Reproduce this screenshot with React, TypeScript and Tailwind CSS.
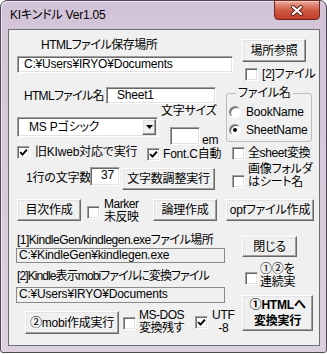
import React from 'react';

const sunken =
  'border border-t-[#a0a0a0] border-l-[#a0a0a0] border-r-white border-b-white bg-white shadow-[inset_1px_1px_0_#696969,inset_-1px_-1px_0_#e3e3e3]';
const raised =
  'border border-t-white border-l-white border-r-[#696969] border-b-[#696969] bg-[#f0f0f0] shadow-[inset_-1px_-1px_0_#a0a0a0,inset_1px_1px_0_#e3e3e3]';

function Btn({ className = '', children }: { className?: string; children: React.ReactNode }) {
  return (
    <button
      type="button"
      className={`flex shrink-0 items-center justify-center text-[12px] leading-[14px] text-black ${raised} ${className}`}
    >
      {children}
    </button>
  );
}

function Check({ checked = false, className = '' }: { checked?: boolean; className?: string }) {
  return (
    <span className={`flex h-[13px] w-[13px] shrink-0 items-center justify-center ${sunken} ${className}`}>
      {checked && (
        <svg width="9" height="9" viewBox="0 0 9 9">
          <path d="M1.2 4.2 L3.5 6.6 L7.9 1.6" fill="none" stroke="#000" strokeWidth="1.9" />
        </svg>
      )}
    </span>
  );
}

function Radio({ checked = false, className = '' }: { checked?: boolean; className?: string }) {
  return (
    <span
      className={`flex h-[12px] w-[12px] shrink-0 items-center justify-center rounded-full border border-t-[#8a8a8a] border-l-[#8a8a8a] border-r-white border-b-white bg-white shadow-[inset_1px_1px_0_#5a5a5a] ${className}`}
    >
      {checked && <span className="h-[4px] w-[4px] rounded-full bg-black" />}
    </span>
  );
}

export default function App() {
  return (
    <div className="h-[354px] w-[327px] overflow-hidden bg-white font-['Liberation_Sans','Noto_Sans_CJK_JP',sans-serif] tracking-[-0.2px] whitespace-nowrap text-black [font-feature-settings:'palt']">
      <div className="flex h-[353px] w-[327px] flex-col rounded-t-[7px] rounded-b-[3px] border border-[#4f4a56] bg-gradient-to-b from-[#d3c3d8] to-[#dcd0df] pr-[6px] pb-[6px] pl-[7px] shadow-[inset_1px_1px_0_#eee6f0]">
        {/* title bar */}
        <div className="flex h-[28px] shrink-0 items-start">
          <div className="mt-[6px] pl-[2px] text-[12px] leading-[16px]">KIキンドル Ver1.05</div>
          <div className="-mt-[1px] ml-auto flex h-[20px] w-[46px] items-center justify-center rounded-b-[4px] border border-[#6b2b22] bg-gradient-to-b from-[#eaaa9c] via-[#cf5a45] to-[#c23d28] shadow-[inset_0_1px_0_#f5cfc5]">
            <svg width="14" height="11" viewBox="0 0 14 11">
              <path d="M3 2 L11 9 M11 2 L3 9" stroke="#5b1e18" strokeWidth="4" strokeLinecap="round" />
              <path d="M3 2 L11 9 M11 2 L3 9" stroke="#fff" strokeWidth="2.2" strokeLinecap="round" />
            </svg>
          </div>
        </div>

        {/* client area */}
        <div className="flex h-[317px] flex-col overflow-hidden border border-[#6f6a78] bg-[#f0f0f0]">
          {/* html save location */}
          <div className="flex h-[54px] shrink-0">
            <div className="ml-[8px] flex w-[216px] flex-col">
              <div className="mt-[8px] pl-[24px] text-[12px] leading-[14px] tracking-[-0.5px]">HTMLファイル保存場所</div>
              <div className={`mt-[4px] h-[17px] pl-[6px] text-[12px] leading-[14px] ${sunken}`}>
                C:¥Users¥IRYO¥Documents
              </div>
            </div>
            <div className="ml-[9px] flex flex-col">
              <Btn className="mt-[9px] h-[23px] w-[64px]">場所参照</Btn>
              <div className="mt-[5px] flex items-center">
                <Check className="ml-[3px]" />
                <span className="ml-[4px] text-[12px] leading-[14px]">[2]ファイル</span>
              </div>
            </div>
          </div>

          {/* file name, font, options */}
          <div className="flex h-[76px] shrink-0">
            <div className="ml-[8px] flex w-[209px] flex-col">
              <div className="flex h-[20px] items-start">
                <div className="mt-[5px] w-[89px] pl-[7px] text-[12px] leading-[14px] tracking-[-0.7px]">HTMLファイル名</div>
                <div className={`mt-[3px] h-[17px] w-[110px] pl-[10px] text-[12px] leading-[14px] ${sunken}`}>Sheet1</div>
              </div>
              <div className="flex h-[42px] items-start">
                <div className={`mt-[13px] flex h-[20px] w-[141px] items-center ${sunken}`}>
                  <span className="flex-1 pl-[11px] text-[12px] leading-[14px]">MS Pゴシック</span>
                  <span className={`mr-[1px] flex h-[16px] w-[14px] items-center justify-center ${raised}`}>
                    <svg width="7" height="4" viewBox="0 0 7 4">
                      <path d="M0 0H7L3.5 4Z" fill="#000" />
                    </svg>
                  </span>
                </div>
                <div className="ml-[3px] flex flex-col">
                  <div className="text-[12px] leading-[14px]">文字サイズ</div>
                  <div className="flex items-start">
                    <div className={`mt-[9px] ml-[9px] h-[18px] w-[30px] ${sunken}`} />
                    <span className="mt-[16px] ml-[2px] text-[12px] leading-[12px]">em</span>
                  </div>
                </div>
              </div>
              <div className="flex h-[14px] items-start">
                <div className="flex w-[130px] items-center">
                  <Check checked />
                  <span className="ml-[5px] text-[12px] leading-[13px]">旧KIweb対応で実行</span>
                </div>
                <div className="mt-[2px] flex items-center">
                  <Check checked />
                  <span className="ml-[3px] text-[12px] leading-[13px]">Font.C自動</span>
                </div>
              </div>
            </div>
            <div className="flex flex-col">
              <fieldset className="mt-[2px] h-[56px] w-[86px] rounded-[3px] border border-[#bdbdbd]">
                <legend className="ml-[9px] px-[2px] text-[12px] leading-[14px]">ファイル名</legend>
                <div className="mt-[5px] flex items-center">
                  <Radio className="ml-[2px]" />
                  <span className="ml-[5px] text-[12px] leading-[14px]">BookName</span>
                </div>
                <div className="mt-[4px] flex items-center">
                  <Radio checked className="ml-[2px]" />
                  <span className="ml-[5px] text-[12px] leading-[14px]">SheetName</span>
                </div>
              </fieldset>
              <div className="mt-[5px] flex items-center">
                <Check className="ml-[6px]" />
                <span className="ml-[3px] text-[12px] leading-[13px] tracking-[-0.4px]">全sheet変換</span>
              </div>
            </div>
          </div>

          {/* characters per line */}
          <div className="flex h-[36px] shrink-0 items-start">
            <div className="mt-[11px] ml-[17px] w-[64px] text-[12px] leading-[14px]">1行の文字数</div>
            <div className={`mt-[7px] h-[19px] w-[30px] pr-[5px] text-right text-[12px] leading-[15px] ${sunken}`}>37</div>
            <Btn className="mt-[8px] ml-[2px] h-[22px] w-[93px]">文字数調整実行</Btn>
            <Check className="mt-[15px] ml-[17px]" />
            <div className="mt-[3px] ml-[3px] text-[12px] leading-[13px]">
              画像フォルダ
              <br />
              はシート名
            </div>
          </div>

          {/* action buttons */}
          <div className="flex h-[33px] shrink-0 items-start">
            <Btn className="mt-[3px] ml-[8px] h-[22px] w-[64px]">目次作成</Btn>
            <div className="flex w-[72px] items-start">
              <Check className="mt-[10px] ml-[6px]" />
              <div className="mt-[2px] ml-[4px] text-center text-[12px] leading-[13px] tracking-[-0.5px]">
                Marker
                <br />
                未反映
              </div>
            </div>
            <Btn className="mt-[3px] h-[22px] w-[64px]">論理作成</Btn>
            <Btn className="mt-[3px] ml-[9px] h-[22px] w-[88px]">opfファイル作成</Btn>
          </div>

          {/* kindlegen */}
          <div className="flex flex-1">
            <div className="ml-[7px] flex w-[220px] flex-col">
              <div className="mt-[4px] pl-[1px] text-[12px] leading-[14px] tracking-[-0.5px]">
                [1]KindleGen/kindlegen.exeファイル場所
              </div>
              <div className="mt-[1px] h-[15px] w-[209px] border border-[#8a8a8a] bg-[#f0f0f0] pl-[2px] text-[12px] leading-[13px]">
                C:¥KindleGen¥kindlegen.exe
              </div>
              <div className="mt-[6px] pl-[1px] text-[12px] leading-[14px] tracking-[-0.9px]">
                [2]Kindle表示mobiファイルに変換ファイル
              </div>
              <div className="mt-[4px] h-[16px] w-[209px] overflow-hidden border border-[#8a8a8a] bg-[#f0f0f0] pl-[2px] text-[12px] leading-[13px]">
                C:¥Users¥IRYO¥Documents
                <br />
                ¥Sheet1.html
              </div>
              <div className="flex items-start">
                <Btn className="mt-[8px] ml-[9px] h-[23px] w-[94px]">②mobi作成実行</Btn>
                <Check className="mt-[14px] ml-[4px]" />
                <div className="mt-[6px] ml-[3px] text-center text-[12px] leading-[13px] tracking-[-0.5px]">
                  MS-DOS
                  <br />
                  変換残す
                </div>
                <Check checked className="mt-[13px] ml-[11px]" />
                <div className="mt-[6px] ml-[4px] text-center text-[12px] leading-[13px]">
                  UTF
                  <br />
                  -8
                </div>
              </div>
            </div>
            <div className="ml-[6px] flex flex-col">
              <Btn className="mt-[7px] h-[21px] w-[55px]">閉じる</Btn>
              <div className="mt-[6px] flex items-start">
                <Check className="mt-[9px] ml-[3px]" />
                <div className="ml-[2px] text-[12px] leading-[13px]">
                  ①②を
                  <br />
                  連続実
                </div>
              </div>
              <Btn className="mt-[6px] h-[36px] w-[71px] font-bold leading-[16px]">
                ①HTMLへ
                <br />
                変換実行
              </Btn>
            </div>
          </div>
        </div>
      </div>
    </div>
  );
}
